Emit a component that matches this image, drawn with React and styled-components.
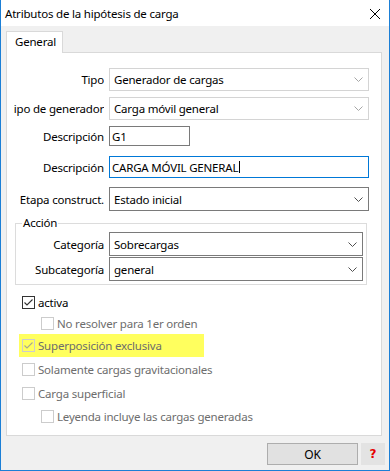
import React from "react";
import styled, { createGlobalStyle } from "styled-components";

const Global = createGlobalStyle`
  html, body { margin: 0; padding: 0; background: #ffffff; }
  body {
    font-family: "Noto Sans", "Open Sans", sans-serif;
    font-size: 11.5px;
    letter-spacing: -0.2px;
    color: #000;
  }
`;

const Window = styled.div`
  width: 390px;
  height: 471px;
  box-sizing: border-box;
  border: 1px solid #1b7fd6;
  border-top: none;
  background: #f0f0f0;
  display: flex;
  flex-direction: column;
  overflow: hidden;
`;

const TitleBar = styled.div`
  height: 26px;
  flex-shrink: 0;
  background: #ffffff;
  display: flex;
  align-items: center;
  padding: 0 8px 0 4px;
`;

const Title = styled.span`
  white-space: nowrap;
  margin-top: 1px;
`;

const CloseBtn = styled.span`
  margin-left: auto;
  width: 12px;
  height: 12px;
  display: flex;
  margin-top: 2px;
`;

const TabStrip = styled.div`
  display: flex;
  padding: 5px 0 0 5px;
`;

const Tab = styled.div`
  box-sizing: border-box;
  height: 22px;
  width: 57px;
  border: 1px solid #d9d9d9;
  border-bottom: none;
  background: #ffffff;
  padding-left: 8px;
  line-height: 20px;
  margin-bottom: -1px;
  position: relative;
  z-index: 1;
`;

const Panel = styled.div`
  box-sizing: border-box;
  height: 384px;
  margin: 0 7px 0 5px;
  border: 1px solid #d9d9d9;
  background: #ffffff;
  padding: 15px 12px 0 7px;
  display: flex;
  flex-direction: column;
`;

const FieldRow = styled.div`
  display: flex;
  height: ${(p) => p.$h}px;
  margin-top: ${(p) => p.$mt || 0}px;
  flex-shrink: 0;
`;

const Label = styled.div`
  width: ${(p) => p.$w || 90}px;
  flex-shrink: 0;
  margin-right: 5px;
  display: flex;
  justify-content: flex-end;
  align-items: center;
  overflow: hidden;
  & > span {
    white-space: nowrap;
    flex-shrink: 0;
  }
`;

const Select = styled.div`
  flex: 1;
  box-sizing: border-box;
  border: 1px solid ${(p) => (p.$light ? "#d4d4d4" : "#7a7a7a")};
  background: #ffffff;
  display: flex;
  align-items: center;
  padding: 0 5px 0 4px;
  & > span {
    flex: 1;
    white-space: nowrap;
  }
  & > svg {
    flex-shrink: 0;
  }
`;

const Input = styled.div`
  box-sizing: border-box;
  width: ${(p) => (p.$w ? p.$w + "px" : "auto")};
  flex: ${(p) => (p.$w ? "0 0 auto" : "1")};
  border: 1px solid ${(p) => (p.$focus ? "#0078d7" : "#7a7a7a")};
  background: #ffffff;
  display: flex;
  align-items: center;
  padding: 0 2px;
  white-space: nowrap;
`;

const Caret = styled.span`
  display: inline-block;
  width: 1px;
  height: 12px;
  background: #000;
  margin-left: 1px;
`;

const Group = styled.div`
  position: relative;
  margin: ${(p) => p.$mt}px 2px 0 1px;
  border: 1px solid #dcdcdc;
  padding: 8px 3px 3px 0;
  display: flex;
  flex-direction: column;
  flex-shrink: 0;
`;

const Legend = styled.span`
  position: absolute;
  top: -9px;
  left: 6px;
  padding: 0 1px;
  background: #ffffff;
  line-height: 16px;
`;

const CheckRow = styled.div`
  display: flex;
  align-items: center;
  height: ${(p) => p.$h}px;
  flex-shrink: 0;
  margin-top: ${(p) => p.$mt || 0}px;
  margin-left: ${(p) => (p.$hl ? 5 : 0)}px;
  padding-left: ${(p) => (p.$hl ? 3 + p.$indent : 8 + p.$indent)}px;
  width: ${(p) => (p.$hl ? "185px" : "auto")};
  box-sizing: border-box;
  background: ${(p) => (p.$hl ? "#ffff5e" : "transparent")};
  color: ${(p) => (p.$disabled ? "#6d6d6d" : "#000")};
`;

const Box = styled.span`
  width: 13px;
  height: 13px;
  box-sizing: border-box;
  border: 1px solid ${(p) => (p.$disabled ? "#cccccc" : "#333333")};
  background: ${(p) => (p.$hl ? "transparent" : "#ffffff")};
  margin-right: 3px;
  flex-shrink: 0;
  display: flex;
  align-items: center;
  justify-content: center;
`;

const CheckText = styled.span`
  white-space: nowrap;
`;

const Footer = styled.div`
  display: flex;
  justify-content: flex-end;
  gap: 3px;
  margin-top: 7px;
  padding-right: 4px;
`;

const Button = styled.div`
  box-sizing: border-box;
  width: 91px;
  height: 22px;
  border: 1px solid #adadad;
  background: #e1e1e1;
  display: flex;
  align-items: center;
  justify-content: center;
  font-size: 12px;
`;

const HelpButton = styled.div`
  width: 24px;
  height: 22px;
  background: #e3e3e3;
  display: flex;
  align-items: center;
  justify-content: center;
  color: #e60000;
  font-family: "DejaVu Sans", sans-serif;
  font-weight: bold;
  font-size: 12px;
  letter-spacing: 0;
`;

const Chevron = ({ color }) => (
  <svg width="9" height="5" viewBox="0 0 9 5">
    <polyline
      points="0.5,0.5 4.5,4.5 8.5,0.5"
      fill="none"
      stroke={color}
      strokeWidth="1"
    />
  </svg>
);

const CheckMark = ({ color }) => (
  <svg width="11" height="11" viewBox="0 0 11 11">
    <polyline
      points="1.5,5.5 4,8 9.5,2.5"
      fill="none"
      stroke={color}
      strokeWidth="1.1"
    />
  </svg>
);

const Checkbox = ({ label, checked, disabled, indent = 0, h, mt, hl }) => (
  <CheckRow $h={h} $mt={mt} $indent={indent} $hl={hl} $disabled={disabled}>
    <Box $disabled={disabled} $hl={hl}>
      {checked && <CheckMark color={disabled ? "#a8a890" : "#333333"} />}
    </Box>
    <CheckText>{label}</CheckText>
  </CheckRow>
);

export default function App() {
  return (
    <>
      <Global />
      <Window>
        <TitleBar>
          <Title>Atributos de la hipótesis de carga</Title>
          <CloseBtn>
            <svg width="12" height="12" viewBox="0 0 12 12">
              <path d="M1 1 L11 11 M11 1 L1 11" stroke="#000" strokeWidth="1" />
            </svg>
          </CloseBtn>
        </TitleBar>
        <TabStrip>
          <Tab>General</Tab>
        </TabStrip>
        <Panel>
          <FieldRow $h={23}>
            <Label>
              <span>Tipo</span>
            </Label>
            <Select $light>
              <span>Generador de cargas</span>
              <Chevron color="#a6a6a6" />
            </Select>
          </FieldRow>
          <FieldRow $h={23} $mt={6}>
            <Label>
              <span>Tipo de generador</span>
            </Label>
            <Select $light>
              <span>Carga móvil general</span>
              <Chevron color="#a6a6a6" />
            </Select>
          </FieldRow>
          <FieldRow $h={20} $mt={6}>
            <Label>
              <span>Descripción</span>
            </Label>
            <Input $w={81}>G1</Input>
          </FieldRow>
          <FieldRow $h={22} $mt={10}>
            <Label>
              <span>Descripción</span>
            </Label>
            <Input $focus>
              CARGA MÓVIL GENERAL
              <Caret />
            </Input>
          </FieldRow>
          <FieldRow $h={24} $mt={9}>
            <Label>
              <span>Etapa construct.</span>
            </Label>
            <Select>
              <span>Estado inicial</span>
              <Chevron color="#505050" />
            </Select>
          </FieldRow>
          <Group $mt={12}>
            <Legend>Acción</Legend>
            <FieldRow $h={24}>
              <Label $w={88}>
                <span>Categoría</span>
              </Label>
              <Select>
                <span>Sobrecargas</span>
                <Chevron color="#505050" />
              </Select>
            </FieldRow>
            <FieldRow $h={24} $mt={1}>
              <Label $w={88}>
                <span>Subcategoría</span>
              </Label>
              <Select>
                <span>general</span>
                <Chevron color="#505050" />
              </Select>
            </FieldRow>
          </Group>
          <Checkbox label="activa" checked h={22} mt={6} />
          <Checkbox label="No resolver para 1er orden" disabled indent={19} h={21} />
          <Checkbox label="Superposición exclusiva" checked disabled hl h={23} />
          <Checkbox label="Solamente cargas gravitacionales" disabled h={24} />
          <Checkbox label="Carga superficial" disabled h={24} />
          <Checkbox
            label="Leyenda incluye las cargas generadas"
            disabled
            indent={19}
            h={23}
          />
        </Panel>
        <Footer>
          <Button>OK</Button>
          <HelpButton>?</HelpButton>
        </Footer>
      </Window>
    </>
  );
}
